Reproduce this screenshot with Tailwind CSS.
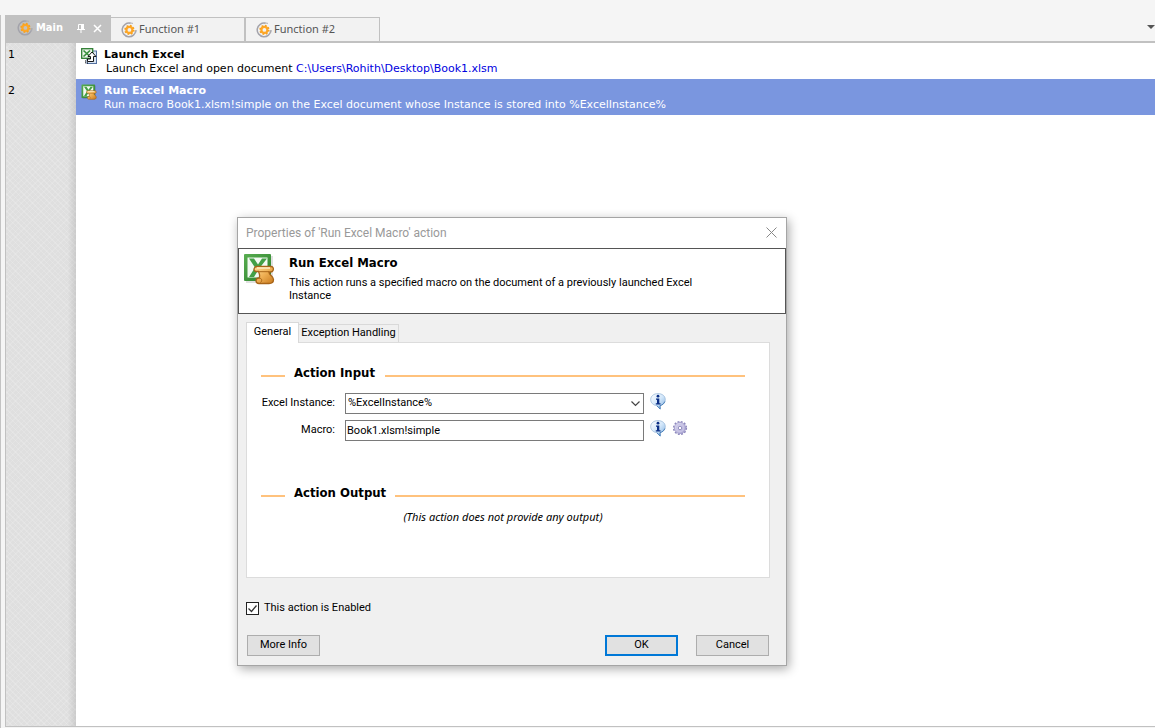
<!DOCTYPE html>
<html lang="en">
<head>
<meta charset="utf-8">
<title>Main</title>
<script src="https://cdn.jsdelivr.net/npm/@tailwindcss/browser@4"></script>
</head>
<body class="relative flex h-screen flex-col overflow-hidden bg-[#f5f5f5] pt-[15px] font-['Noto_Sans',sans-serif] text-[11px] text-black">
<svg class="absolute size-0" aria-hidden="true">
  <defs>
    <linearGradient id="paper" x1="0" y1="0" x2="1" y2="1"><stop offset="0" stop-color="#ffdf9a"/><stop offset=".5" stop-color="#efb055"/><stop offset="1" stop-color="#c8791c"/></linearGradient>
    <linearGradient id="green" x1="0" y1="0" x2="1" y2="1"><stop offset="0" stop-color="#58ad50"/><stop offset="1" stop-color="#2b7f2b"/></linearGradient>
    <linearGradient id="bubble" x1="0" y1="0" x2="1" y2="1"><stop offset="0" stop-color="#ffffff"/><stop offset=".5" stop-color="#d3e7fa"/><stop offset="1" stop-color="#7fb0e0"/></linearGradient>
    <linearGradient id="lilac" x1="0" y1="0" x2="1" y2="1"><stop offset="0" stop-color="#e6e3f6"/><stop offset="1" stop-color="#a5a0cf"/></linearGradient>
    <symbol id="flow" viewBox="0 0 16 16">
      <path d="M9.500 1.300A6.800 6.800 0 1 0 14.800 8.200" fill="none" stroke="#a3a3ab" stroke-width="1.500"/>
      <path d="M8.300 .8l3.700.6M15.200 8.200l-.5 2.600" stroke="#b0b0b6" stroke-width="1"/>
      <circle cx="8.400" cy="7.900" r="3" fill="none" stroke="#ffa726" stroke-width="2.200"/>
      <circle cx="8.400" cy="7.900" r="4.300" fill="none" stroke="#f7a11f" stroke-width="1.700" stroke-dasharray="1.700 1.680"/>
    </symbol>
    <symbol id="macro" viewBox="0 0 32 32">
      <path d="M3 3h27v27H3z" fill="#000" opacity=".12"/>
      <rect x="1" y="1" width="27" height="27" rx="1" fill="url(#green)"/>
      <rect x="4.500" y="4.500" width="20" height="20" fill="#f4faf3"/>
      <path d="M6 5.500h5l4 6 4-6h5l-7 9 7 9.500h-5l-4-6.500-4 6.500H6l6-9.500z" fill="#43a047"/>
      <path d="M14 13.500H28c3.500 0 3 5.500-.5 5.500h-1.500c-.5 3 4.500 4 4.500 7.500 0 3-2 4-4.500 4H16c-4 0-4-5.500 0-5.500 1.500-2 .5-4-.5-6.500H13c-3-.5-2.500-5 1-5z" fill="url(#paper)" stroke="#a86418" stroke-width="1.300"/>
      <path d="M14 15h13" stroke="#ffebc2" stroke-width="1.500"/>
      <path d="M15.500 18.700h10.500M16 25c3 0 3.500 3 1.500 4.500" fill="none" stroke="#a86418"/>
    </symbol>
    <symbol id="launch" viewBox="0 0 16 16">
      <rect x="6" y="3" width="9.500" height="12.500" fill="#d8e4f2" stroke="#5471a0"/>
      <rect x=".7" y=".7" width="11" height="9.600" fill="#edf6ec" stroke="#2d7d31" stroke-width="1.300"/>
      <path d="M2.500 2.500L9 8.500M9 2.500L2.500 8.500" stroke="#388e3c" stroke-width="1.700"/>
      <path d="M11 4l4 4.500h-2.500v5h-6v-2.500h3V8.500H7z" fill="#fff" stroke="#000" stroke-width=".9"/>
      <path d="M4.500 12.500v2.500h3" fill="none" stroke="#000" stroke-dasharray="1 1"/>
    </symbol>
    <symbol id="info" viewBox="0 0 16 17">
      <path d="M8 .6c4.300 0 7.300 2.500 7.300 6 0 3-2.200 5.400-5.300 6l.2 3.400-3.400-3.300C3.200 12.200.7 9.800.7 6.600.7 3.100 3.700.6 8 .6z" fill="url(#bubble)" stroke="#9dbbd9" stroke-width=".8"/>
      <path d="M14.800 8.500c-.8 2.300-2.500 3.600-4.800 4.100l.2 3.400-3.400-3.300" fill="none" stroke="#3f78b5" stroke-width=".9"/>
      <path d="M6 5.500h3.300v4.800h1.200v1.200H5.800v-1.200H7V6.700H6z" fill="#0b2f86"/>
      <circle cx="8" cy="3.200" r="1.400" fill="#0b2f86"/>
    </symbol>
    <symbol id="gear" viewBox="0 0 16 16">
      <circle cx="8" cy="8" r="6.300" fill="none" stroke="#8d88bd" stroke-width="1.600" stroke-dasharray="1.900 1.400"/>
      <circle cx="8" cy="8" r="5.600" fill="url(#lilac)" stroke="#9c97c8" stroke-width=".8"/>
      <circle cx="8" cy="8" r="3.500" fill="none" stroke="#c9c5e6" stroke-width="1.200"/>
      <circle cx="8" cy="8" r="1.700" fill="#fff" stroke="#827db5" stroke-width=".8"/>
    </symbol>
  </defs>
</svg>

<div class="flex min-h-0 flex-1 border-l border-[#c3c3c3] pl-1">
  <main class="flex min-w-0 flex-1 flex-col">
    <nav class="flex h-7 shrink-0 items-end border-b-2 border-[#c1c1c1]">
      <div class="flex h-[26px] w-[106px] items-center bg-[#c1c1c1] pl-3 text-white">
        <svg class="size-4"><use href="#flow"/></svg>
        <button class="ml-[3px] w-[38px] text-left font-['DejaVu_Sans_Condensed',sans-serif] text-[11px] font-bold">Main</button>
        <button class="ml-[3px]" aria-label="Pin"><svg class="h-[9px] w-[8px]" viewBox="0 0 8 9"><path d="M1.500 5V.5h5V5M0 5.500h8M4 6v3" fill="none" stroke="#fff"/><path d="M4 0h3v5H4z" fill="#fff"/></svg></button>
        <button class="ml-2" aria-label="Close"><svg class="size-[9px]" viewBox="0 0 9 9"><path d="M1 1l7 7M8 1L1 8" stroke="#fff" stroke-width="1.500"/></svg></button>
      </div>
      <button class="flex h-6 w-[134px] items-center gap-0.5 border-t border-r border-[#c1c1c1] bg-[#f2f2f2] pl-2.5 text-[11px] text-[#555]"><svg class="size-4"><use href="#flow"/></svg>Function #1</button>
      <button class="flex h-6 w-[135px] items-center gap-0.5 border border-b-0 border-[#c1c1c1] bg-[#f2f2f2] pl-2.5 text-[11px] text-[#555]"><svg class="size-4"><use href="#flow"/></svg>Function #2</button>
      <button class="ml-auto mb-3" aria-label="More tabs"><svg class="h-1 w-2" viewBox="0 0 8 4"><path d="M0 0h8L4 4z" fill="#555"/></svg></button>
    </nav>

    <section class="mb-px flex min-h-0 flex-1 border-b border-l border-[#c1c1c1] bg-white font-['DejaVu_Sans',sans-serif] leading-[14px]">
      <div class="w-[70px] shrink-0 bg-[#dfdfdf] bg-[linear-gradient(90deg,transparent_88%,#00000018),repeating-linear-gradient(45deg,#ffffff28_0_1px,transparent_1px_4px),repeating-linear-gradient(-45deg,#ffffff20_0_1px,transparent_1px_4px)]">
        <div class="h-9 pt-[5px] pl-0.5">1</div>
        <div class="h-9 pt-[5px] pl-0.5">2</div>
      </div>
      <div class="min-w-0 flex-1">
        <div class="flex h-9 gap-[7px] pt-[5px] pl-[5px]">
          <svg class="size-4 shrink-0"><use href="#launch"/></svg>
          <div>
            <p class="font-bold">Launch Excel</p>
            <p class="pl-0.5">Launch Excel and open document <a href="#" class="text-[#0000e0]">C:\Users\Rohith\Desktop\Book1.xlsm</a></p>
          </div>
        </div>
        <div class="flex h-9 gap-[7px] bg-[#7a96df] pt-[5px] pl-[5px] text-white">
          <svg class="size-4 shrink-0"><use href="#macro"/></svg>
          <div>
            <p class="font-bold">Run Excel Macro</p>
            <p>Run macro Book1.xlsm!simple on the Excel document whose Instance is stored into %ExcelInstance%</p>
          </div>
        </div>
      </div>
    </section>
  </main>
</div>

<div role="dialog" aria-labelledby="dlg" class="absolute top-[217px] left-[237px] w-[550px] border border-[#a5a5a5] bg-[#f0f0f0] font-[Roboto,sans-serif] shadow-[2px_3px_10px_#00000055]">
  <div class="flex h-[30px] items-center justify-between bg-white pr-[9px] pl-2">
    <h1 id="dlg" class="text-[12px] text-[#999]">Properties of 'Run Excel Macro' action</h1>
    <button class="pb-0.5" aria-label="Close dialog"><svg class="size-[11px]" viewBox="0 0 11 11"><path d="M.5.500l10 10M10.500.500l-10 10" stroke="#888"/></svg></button>
  </div>
  <header class="flex h-[66px] gap-3 border border-[#555] bg-white pt-1 pl-1">
    <svg class="size-8 shrink-0"><use href="#macro"/></svg>
    <div class="pl-0.5 leading-[13px]">
      <h2 class="pt-[3px] font-['DejaVu_Sans_Condensed',sans-serif] text-[13px] font-bold">Run Excel Macro</h2>
      <p class="w-[420px] pt-[7px]">This action runs a specified macro on the document of a previously launched Excel Instance</p>
    </div>
  </header>

  <div class="pt-2 pr-4 pb-[9px] pl-2">
    <div role="tablist" class="flex items-end">
      <button role="tab" aria-selected="true" class="relative z-10 -mb-px h-[21px] w-[53px] border border-b-0 border-[#d9d9d9] bg-white pb-0.5">General</button>
      <button role="tab" class="h-[18px] w-[100px] border border-b-0 border-l-0 border-[#d9d9d9] bg-[#f0f0f0] whitespace-nowrap">Exception Handling</button>
    </div>
    <div role="tabpanel" class="h-[236px] border border-[#dcdcdc] bg-white pt-5 pr-6 pl-3.5">
      <div class="flex h-5 items-center text-[13px] font-bold">
        <span class="mt-1.5 h-0.5 w-6 bg-[#ffc27d]"></span><h3 class="w-[100px] pl-[9px] font-['DejaVu_Sans_Condensed',sans-serif]">Action Input</h3><span class="mt-1.5 h-0.5 flex-1 bg-[#ffc27d]"></span>
      </div>
      <div class="mt-2.5 grid grid-cols-[74px_299px_1fr] gap-x-[10px] gap-y-1.5">
        <label for="inst" class="flex h-[21px] items-center justify-end whitespace-nowrap">Excel Instance:</label>
        <div class="relative">
          <select id="inst" class="block h-[21px] w-full appearance-none border border-[#7a7a7a] bg-white pl-0.5"><option>%ExcelInstance%</option></select>
          <svg class="pointer-events-none absolute top-2 right-1 h-[6px] w-[9px]" viewBox="0 0 9 6"><path d="M.5.500l4 4 4-4" fill="none" stroke="#444" stroke-width="1.200"/></svg>
        </div>
        <div class="-ml-1 flex"><svg class="h-[17px] w-4"><use href="#info"/></svg></div>
        <label for="macroName" class="flex h-[21px] items-center justify-end">Macro:</label>
        <input id="macroName" value="Book1.xlsm!simple" class="h-[21px] w-full border border-[#7a7a7a] bg-white pl-px">
        <div class="-ml-1 flex gap-1.5"><svg class="h-[17px] w-4"><use href="#info"/></svg><button class="h-4" aria-label="Insert variable"><svg class="size-4"><use href="#gear"/></svg></button></div>
      </div>
      <div class="mt-[42px] flex h-5 items-center text-[13px] font-bold">
        <span class="mt-1.5 h-0.5 w-6 bg-[#ffc27d]"></span><h3 class="w-[110px] pl-[9px] font-['DejaVu_Sans_Condensed',sans-serif]">Action Output</h3><span class="mt-1.5 h-0.5 flex-1 bg-[#ffc27d]"></span>
      </div>
      <p class="mt-1.5 text-center font-['Noto_Sans',sans-serif] italic">(This action does not provide any output)</p>
    </div>

    <label class="mt-[22px] flex h-4 items-center gap-1.5">
      <input type="checkbox" checked class="size-[13px] appearance-none border border-[#222] bg-white">
      <svg class="pointer-events-none -ml-[18px] size-[11px]" viewBox="0 0 11 11"><path d="M1.500 5.500l3 3 5-6" fill="none" stroke="#333" stroke-width="1.300"/></svg>
      This action is Enabled
    </label>
    <div class="mt-[19px] flex gap-[18px] pr-px pl-px">
      <button class="mr-auto h-[21px] w-[73px] border border-[#adadad] bg-[#e1e1e1]">More Info</button>
      <button class="h-[21px] w-[73px] border-2 border-[#0078d7] bg-[#e1e1e1]">OK</button>
      <button class="h-[21px] w-[73px] border border-[#adadad] bg-[#e1e1e1]">Cancel</button>
    </div>
  </div>
</div>
</body>
</html>
